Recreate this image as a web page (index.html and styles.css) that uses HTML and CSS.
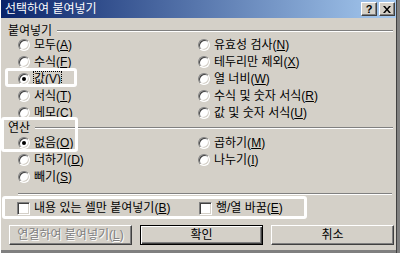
FILE: index.html
```html
<!DOCTYPE html>
<html>
<head>
	<meta charset="utf-8">
	<title>선택하여 붙여넣기</title>
	<link rel="stylesheet" href="styles.css">
</head>
<body>
	<div class="window">
		<div class="titlebar">
			<span class="title">선택하여 붙여넣기</span>
			<span class="cap-btn help">?</span>
			<span class="cap-btn close">
				<svg width="8" height="7" viewBox="0 0 8 7"><path d="M0 0h2l2 2.5L6 0h2L5 3.5 8 7H6L4 4.5 2 7H0l3-3.5z" fill="#000"/></svg>
			</span>
		</div>

		<div class="group-head"><span>붙여넣기</span><i class="rule"></i></div>
		<div class="options paste">
			<label class="opt"><span class="radio"></span><span>모두(<u>A</u>)</span></label>
			<label class="opt"><span class="radio"></span><span>수식(<u>F</u>)</span></label>
			<label class="opt"><span class="radio checked"></span><span class="focus">값(<u>V</u>)</span></label>
			<label class="opt"><span class="radio"></span><span>서식(<u>T</u>)</span></label>
			<label class="opt"><span class="radio"></span><span>메모(<u>C</u>)</span></label>
			<label class="opt"><span class="radio"></span><span>유효성 검사(<u>N</u>)</span></label>
			<label class="opt"><span class="radio"></span><span>테두리만 제외(<u>X</u>)</span></label>
			<label class="opt"><span class="radio"></span><span>열 너비(<u>W</u>)</span></label>
			<label class="opt"><span class="radio"></span><span>수식 및 숫자 서식(<u>R</u>)</span></label>
			<label class="opt"><span class="radio"></span><span>값 및 숫자 서식(<u>U</u>)</span></label>
		</div>

		<div class="group-head op"><span>연산</span><i class="rule"></i></div>
		<div class="options ops">
			<label class="opt"><span class="radio checked"></span><span>없음(<u>O</u>)</span></label>
			<label class="opt"><span class="radio"></span><span>더하기(<u>D</u>)</span></label>
			<label class="opt"><span class="radio"></span><span>빼기(<u>S</u>)</span></label>
			<label class="opt"><span class="radio"></span><span>곱하기(<u>M</u>)</span></label>
			<label class="opt"><span class="radio"></span><span>나누기(<u>I</u>)</span></label>
		</div>

		<div class="separator"></div>

		<div class="checks">
			<label class="opt"><span class="checkbox"></span><span>내용 있는 셀만 붙여넣기(<u>B</u>)</span></label>
			<label class="opt"><span class="checkbox"></span><span>행/열 바꿈(<u>E</u>)</span></label>
		</div>

		<div class="buttons">
			<button class="btn" disabled>연결하여 붙여넣기(<u>L</u>)</button>
			<button class="btn default">확인</button>
			<button class="btn">취소</button>
		</div>

		<div class="mark mark-value"></div>
		<div class="mark mark-ops"></div>
		<div class="mark mark-checks"></div>
	</div>
</body>
</html>
```

FILE: styles.css
```css
* {
	box-sizing: border-box;
}

body {
	margin: 0;
	background-color: #d4d0c8;
	font-family: "Liberation Sans", "Noto Sans CJK KR", sans-serif;
	font-size: 12px;
	line-height: 14px;
	color: #000;
}

.window {
	position: relative;
	width: 400px;
	height: 253px;
	background-color: #d4d0c8;
	border-left: 1px solid #fff;
	box-shadow: inset -3px 0 0 #808080, inset -4px 0 0 #404040, inset 0 -3px 0 #808080;
	overflow: hidden;
}

.titlebar {
	display: flex;
	align-items: center;
	height: 18px;
	margin-right: 4px;
	padding: 0 1px 0 4px;
	background: linear-gradient(to right, #0a246a, #a6caf0);
	color: #fff;
}

.title {
	flex: 1;
	line-height: 18px;
}

.cap-btn {
	display: flex;
	align-items: center;
	justify-content: center;
	width: 16px;
	height: 14px;
	background-color: #d4d0c8;
	border: 1px solid;
	border-color: #fff #404040 #404040 #fff;
	box-shadow: inset -1px -1px 0 #808080;
	color: #000;
	font-weight: bold;
	font-size: 11px;
	line-height: 1;
}

.cap-btn.close {
	margin-left: 2px;
}

.group-head {
	display: flex;
	align-items: center;
	height: 12px;
	margin: 7px 7px 0 7px;
}

.group-head .rule {
	flex: 1;
	margin-left: 5px;
	border-top: 1px solid #808080;
	border-bottom: 1px solid #fff;
}

.group-head.op {
	margin-top: 1px;
}

.options {
	display: grid;
	grid-template-columns: 180px 1fr;
	grid-auto-flow: column;
	grid-template-rows: repeat(5, 17px);
	padding-left: 17px;
	margin-top: -1px;
}

.options.ops {
	grid-template-rows: repeat(3, 17px);
	margin-top: 0;
}

.opt {
	display: flex;
	align-items: center;
	gap: 4px;
	white-space: nowrap;
}

.radio {
	position: relative;
	flex: none;
	width: 12px;
	height: 12px;
	border-radius: 50%;
	background-color: #fff;
	border: 1px solid;
	border-color: #808080 #fff #fff #808080;
	box-shadow: inset 1px 1px 0 #404040, inset -1px -1px 0 #d4d0c8;
}

.radio.checked::after {
	content: "";
	position: absolute;
	left: 3px;
	top: 3px;
	width: 4px;
	height: 4px;
	border-radius: 50%;
	background-color: #000;
}

.focus {
	outline: 1px dotted #000;
}

.separator {
	margin: 8px 8px 0 17px;
	border-top: 1px solid #808080;
	border-bottom: 1px solid #fff;
}

.checks {
	display: grid;
	grid-template-columns: 182px 1fr;
	height: 14px;
	margin-top: 6px;
	padding-left: 16px;
}

.checkbox {
	flex: none;
	width: 13px;
	height: 13px;
	background-color: #fff;
	border: 1px solid;
	border-color: #808080 #fff #fff #808080;
	box-shadow: inset 1px 1px 0 #404040, inset -1px -1px 0 #d4d0c8;
}

.buttons {
	display: flex;
	gap: 8px;
	margin: 10px 0 0 8px;
}

.btn {
	width: 123px;
	height: 20px;
	padding: 0;
	background-color: #d4d0c8;
	border: 1px solid;
	border-color: #fff #404040 #404040 #fff;
	box-shadow: inset -1px -1px 0 #808080;
	font-family: inherit;
	font-size: 12px;
	line-height: 14px;
	color: #000;
}

.btn:disabled {
	color: #808080;
	text-shadow: 1px 1px 0 #fff;
}

.btn.default {
	border-color: #000;
	box-shadow: inset 1px 1px 0 #fff, inset -1px -1px 0 #404040, inset -2px -2px 0 #808080;
}

.mark {
	position: absolute;
	border: 3px solid #fff;
	border-radius: 3px;
}

.mark-value {
	left: 4px;
	top: 68px;
	width: 72px;
	height: 19px;
}

.mark-ops {
	left: 0;
	top: 117px;
	width: 77px;
	height: 35px;
}

.mark-checks {
	left: 1px;
	top: 196px;
	width: 305px;
	height: 23px;
}
```
